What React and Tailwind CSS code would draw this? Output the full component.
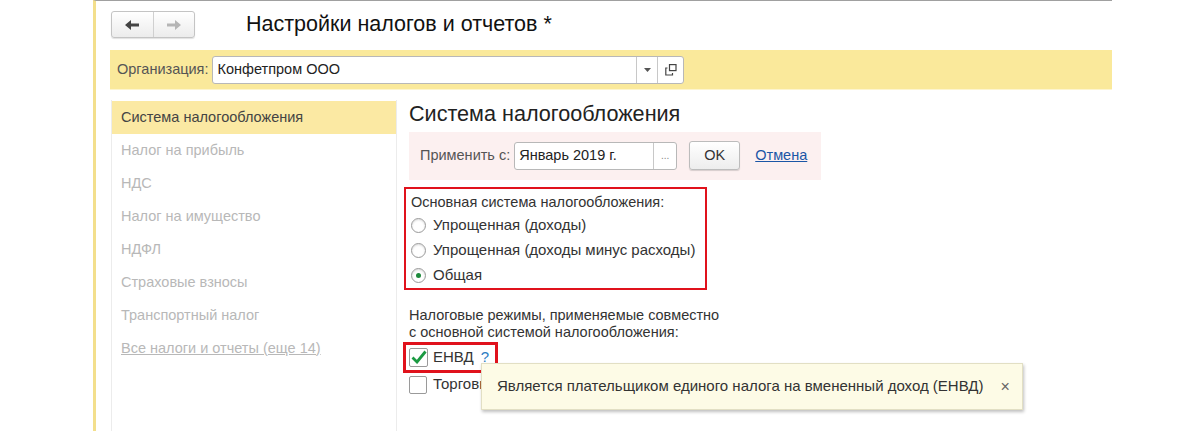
import React from "react";

const navItems = [
  "Налог на прибыль",
  "НДС",
  "Налог на имущество",
  "НДФЛ",
  "Страховые взносы",
  "Транспортный налог",
];

function Arrow({ dir, color }) {
  return (
    <svg width="16" height="12" viewBox="0 0 16 12">
      <g transform={dir === "right" ? "translate(16 0) scale(-1 1)" : undefined}>
        <path d="M1 6 L7 1 L7 4.5 L15 4.5 L15 7.5 L7 7.5 L7 11 Z" fill={color} />
      </g>
    </svg>
  );
}

function Radio({ checked, label }) {
  return (
    <div className="flex items-center h-[25px]">
      <span className="w-[15px] h-[15px] rounded-full border border-[#9a9a9a] bg-white flex items-center justify-center shadow-[inset_0_1px_2px_rgba(0,0,0,0.15)]">
        {checked && <span className="w-[5px] h-[5px] rounded-full bg-[#1e8a3c]" />}
      </span>
      <span className="ml-[7px] text-[15px]">{label}</span>
    </div>
  );
}

export default function App() {
  return (
    <div
      className="w-[1200px] h-[431px] bg-white overflow-hidden relative text-[14.5px] text-[#333]"
      style={{ fontFamily: '"Liberation Sans", Arial, sans-serif' }}
    >
      <div className="ml-[93px] w-[1019px] h-full border-l-[3px] border-l-[#f3df8c] border-t border-t-[#a0a0a0] flex flex-col">
        {/* ===== HEADER ===== */}
        <div className="flex items-center h-[49px] pl-[15px] pb-[2px]">
          <div className="flex w-[84px] h-[27px] border border-[#c4c4c4] rounded-[3px] bg-gradient-to-b from-white to-[#ececec] shadow-[0_1px_1px_rgba(0,0,0,0.12)]">
            <div className="flex-1 flex items-center justify-center border-r border-[#d0d0d0]">
              <Arrow dir="left" color="#444" />
            </div>
            <div className="flex-1 flex items-center justify-center">
              <Arrow dir="right" color="#b5b5b5" />
            </div>
          </div>
          <h1 className="ml-[51px] text-[21.5px] text-[#111] leading-none">
            Настройки налогов и отчетов *
          </h1>
        </div>

        {/* ===== ORG BAR ===== */}
        <div className="ml-[14px] h-[40px] bg-[#fae99b] flex items-center pl-[7px] border-b border-b-[#fdf5cf]">
          <span className="text-[#555]">Организация:</span>
          <div className="ml-[4px] flex h-[28px] border border-[#b8b8b8] rounded-[3px] bg-white">
            <div className="w-[423px] flex items-center pl-[4px] text-[#222]">Конфетпром ООО</div>
            <div className="w-[21px] flex items-center justify-center border-l border-[#c8c8c8]">
              <svg width="7" height="4" viewBox="0 0 7 4"><path d="M0 0 L7 0 L3.5 4 Z" fill="#555" /></svg>
            </div>
            <div className="w-[26px] flex items-center justify-center border-l border-[#c8c8c8]">
              <svg width="12" height="12" viewBox="0 0 12 12" fill="none" stroke="#444" strokeWidth="1.2">
                <rect x="4.5" y="0.6" width="6.5" height="6" />
                <path d="M2.5 4 L0.8 4 L0.8 11 L7.5 11 L7.5 9" />
              </svg>
            </div>
          </div>
        </div>

        {/* ===== BODY ===== */}
        <div className="flex flex-1 mt-[10px]">
          {/* LEFT NAV */}
          <div className="ml-[15px] w-[286px] border-l border-r border-[#ececec] pt-[1px]">
            <div className="h-[33px] bg-[#fbe9a3] flex items-center pl-[9px] text-[#444]">
              Система налогообложения
            </div>
            {navItems.map((t) => (
              <div key={t} className="h-[33px] flex items-center pl-[9px] text-[#b8b8b8]">
                {t}
              </div>
            ))}
            <div className="h-[33px] flex items-center pl-[9px] text-[#b8b8b8] underline">
              Все налоги и отчеты (еще 14)
            </div>
          </div>

          {/* RIGHT CONTENT */}
          <div className="pl-[12px] flex flex-col">
            <h2 className="text-[21.6px] text-[#222] leading-none mt-[3px]">Система налогообложения</h2>

            <div className="mt-[7px] w-[412px] h-[48px] bg-[#fcf0f0] flex items-center pl-[11px]">
              <span className="text-[#555]">Применить с:</span>
              <div className="ml-[4px] flex h-[28px] border border-[#b8b8b8] rounded-[3px] bg-white">
                <div className="w-[138px] flex items-center pl-[4px] text-[#222]">Январь 2019 г.</div>
                <div className="w-[23px] flex items-center justify-center border-l border-[#c8c8c8] text-[10px] text-[#888]">...</div>
              </div>
              <button className="ml-[12px] w-[51px] h-[29px] border border-[#bcbcbc] rounded-[3px] bg-gradient-to-b from-white to-[#ededed] shadow-[0_1px_1px_rgba(0,0,0,0.15)] text-[#333]">
                OK
              </button>
              <a className="ml-[15px] text-[#1b56a6] underline">Отмена</a>
            </div>

            <div className="mt-[7px] -ml-[5px] w-[303px] h-[103px] border-2 border-[#e0121c] pl-[5px] pt-[4px] text-[#333]">
              <div className="h-[20px] flex items-center">Основная система налогообложения:</div>
              <Radio label="Упрощенная (доходы)" />
              <Radio label="Упрощенная (доходы минус расходы)" />
              <Radio checked label="Общая" />
            </div>

            <div className="mt-[17px] leading-[17px] text-[#333]">
              <div>Налоговые режимы, применяемые совместно</div>
              <div>с основной системой налогообложения:</div>
            </div>

            <div className="mt-[1px] -ml-[6px] w-[95px] h-[31px] border-[3px] border-[#e0121c] flex items-center pl-[3px]">
              <span className="w-[19px] h-[19px] border border-[#9a9a9a] rounded-[2px] bg-white flex items-center justify-center">
                <svg width="16" height="14" viewBox="0 0 16 14">
                  <path d="M1.5 7.5 L6 12 L14.5 1.5" fill="none" stroke="#1b9a42" strokeWidth="2.8" strokeLinejoin="miter" />
                </svg>
              </span>
              <span className="ml-[5px] text-[15px] text-[#333]">ЕНВД</span>
              <span className="ml-[7px] text-[15px] text-[#2d7dc2]">?</span>
            </div>

            <div className="mt-[2px] flex items-center h-[20px]">
              <span className="w-[18px] h-[18px] border border-[#9a9a9a] rounded-[2px] bg-white" />
              <span className="ml-[6px] text-[15px] text-[#333]">Торговый сбор</span>
            </div>
          </div>
        </div>
      </div>

      {/* ===== TOOLTIP ===== */}
      <div className="absolute left-[481px] top-[363px] w-[542px] h-[47px] bg-[#fdfbe6] border border-[#e2dfc4] shadow-[1px_2px_3px_rgba(0,0,0,0.25)] flex items-center pl-[15px] text-[15px] text-[#333]">
        <span>Является плательщиком единого налога на вмененный доход (ЕНВД)</span>
        <span className="ml-[17px] text-[16px] text-[#666]">×</span>
      </div>
    </div>
  );
}
